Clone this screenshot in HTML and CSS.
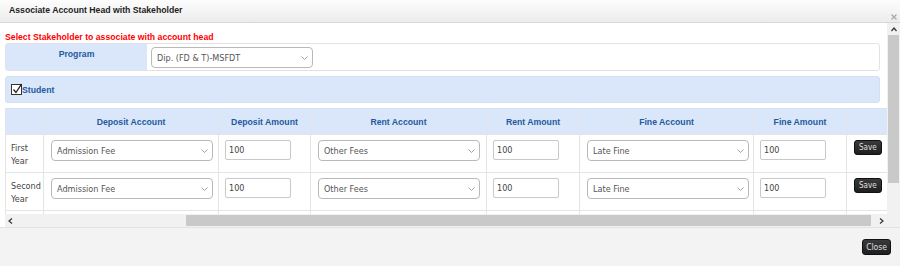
FILE: index.html
```html
<!DOCTYPE html>
<html lang="en">
<head>
    <meta charset="UTF-8">
    <meta name="viewport" content="width=device-width, initial-scale=1.0">
    <title>Associate Account Head with Stakeholder</title>
    <link rel="stylesheet" href="styles.css">
</head>
<body>
    <div class="dialog">
        <!-- Title bar -->
        <div class="dialog-head">
            <span class="dialog-title">Associate Account Head with Stakeholder</span>
            <svg class="dialog-x" width="6" height="6" viewBox="0 0 6 6"><path d="M0.5 0.5L5.5 5.5M5.5 0.5L0.5 5.5" stroke="#a8a8a8" stroke-width="1.2"/></svg>
        </div>

        <div class="dialog-body">
            <div class="content">
                <p class="hint">Select Stakeholder to associate with account head</p>

                <!-- Program -->
                <div class="program-row">
                    <div class="program-label">Program</div>
                    <div class="program-field">
                        <div class="select">
                            <span>Dip. (FD &amp; T)-MSFDT</span>
                            <svg width="7" height="4" viewBox="0 0 7 4"><path d="M0.5 0.5L3.5 3.5L6.5 0.5" fill="none" stroke="#999" stroke-width="0.9"/></svg>
                        </div>
                    </div>
                </div>

                <!-- Stakeholder -->
                <div class="student-row">
                    <svg class="check" width="11" height="12" viewBox="0 0 11 12">
                        <rect x="0.5" y="1.5" width="10" height="10" fill="#fff" stroke="#333"/>
                        <path d="M2.5 6.5L5 9.5L10.5 1" fill="none" stroke="#222" stroke-width="1.3"/>
                    </svg>
                    <span>Student</span>
                </div>

                <!-- Account grid -->
                <div class="grid-wrap">
                    <div class="grid-clip">
                        <table class="grid">
                            <colgroup>
                                <col style="width:38px">
                                <col style="width:175px">
                                <col style="width:92px">
                                <col style="width:176px">
                                <col style="width:93px">
                                <col style="width:174px">
                                <col style="width:93px">
                                <col style="width:41px">
                            </colgroup>
                            <thead>
                                <tr>
                                    <th></th>
                                    <th>Deposit Account</th>
                                    <th>Deposit Amount</th>
                                    <th>Rent Account</th>
                                    <th>Rent Amount</th>
                                    <th>Fine Account</th>
                                    <th>Fine Amount</th>
                                    <th></th>
                                </tr>
                            </thead>
                            <tbody>
                                <tr>
                                    <td class="year">First Year</td>
                                    <td><div class="select"><span>Admission Fee</span><svg width="7" height="4" viewBox="0 0 7 4"><path d="M0.5 0.5L3.5 3.5L6.5 0.5" fill="none" stroke="#999" stroke-width="0.9"/></svg></div></td>
                                    <td><div class="amount">100</div></td>
                                    <td><div class="select"><span>Other Fees</span><svg width="7" height="4" viewBox="0 0 7 4"><path d="M0.5 0.5L3.5 3.5L6.5 0.5" fill="none" stroke="#999" stroke-width="0.9"/></svg></div></td>
                                    <td><div class="amount">100</div></td>
                                    <td><div class="select"><span>Late Fine</span><svg width="7" height="4" viewBox="0 0 7 4"><path d="M0.5 0.5L3.5 3.5L6.5 0.5" fill="none" stroke="#999" stroke-width="0.9"/></svg></div></td>
                                    <td><div class="amount">100</div></td>
                                    <td><button class="btn">Save</button></td>
                                </tr>
                                <tr>
                                    <td class="year">Second Year</td>
                                    <td><div class="select"><span>Admission Fee</span><svg width="7" height="4" viewBox="0 0 7 4"><path d="M0.5 0.5L3.5 3.5L6.5 0.5" fill="none" stroke="#999" stroke-width="0.9"/></svg></div></td>
                                    <td><div class="amount">100</div></td>
                                    <td><div class="select"><span>Other Fees</span><svg width="7" height="4" viewBox="0 0 7 4"><path d="M0.5 0.5L3.5 3.5L6.5 0.5" fill="none" stroke="#999" stroke-width="0.9"/></svg></div></td>
                                    <td><div class="amount">100</div></td>
                                    <td><div class="select"><span>Late Fine</span><svg width="7" height="4" viewBox="0 0 7 4"><path d="M0.5 0.5L3.5 3.5L6.5 0.5" fill="none" stroke="#999" stroke-width="0.9"/></svg></div></td>
                                    <td><div class="amount">100</div></td>
                                    <td><button class="btn">Save</button></td>
                                </tr>
                                <tr>
                                    <td></td><td></td><td></td><td></td><td></td><td></td><td></td><td></td>
                                </tr>
                            </tbody>
                        </table>
                    </div>
                    <!-- horizontal scrollbar -->
                    <div class="hscroll">
                        <svg width="5" height="6" viewBox="0 0 5 6"><path d="M4 0.5L1 3L4 5.5" fill="none" stroke="#333" stroke-width="1.2"/></svg>
                        <div class="hscroll-track"><div class="hscroll-thumb"></div></div>
                        <svg width="5" height="6" viewBox="0 0 5 6"><path d="M1 0.5L4 3L1 5.5" fill="none" stroke="#333" stroke-width="1.2"/></svg>
                    </div>
                </div>
            </div>

            <!-- vertical scrollbar -->
            <div class="vscroll">
                <svg class="vscroll-up" width="6" height="5" viewBox="0 0 6 5"><path d="M0.5 4L3 1L5.5 4" fill="none" stroke="#333" stroke-width="1.2"/></svg>
                <div class="vscroll-thumb"></div>
            </div>
        </div>

        <div class="dialog-foot">
            <button class="btn btn-close">Close</button>
        </div>
    </div>
</body>
</html>
```

FILE: styles.css
```css
body {
    margin: 0;
    font-family: "DejaVu Sans Condensed", "DejaVu Sans", sans-serif;
    font-size: 9px;
    color: #333;
    background: #fff;
}

/* bold labels use a narrower face */
.dialog-title,
.hint,
.program-label,
.student-row,
.grid th {
    font-family: "Liberation Sans", Arial, sans-serif;
    font-weight: bold;
    font-size: 8.7px;
}

.dialog {
    width: 900px;
    height: 266px;
    display: flex;
    flex-direction: column;
    overflow: hidden;
}

/* Title bar */
.dialog-head {
    height: 22px;
    border-bottom: 1px solid #d9d9d9;
    background: linear-gradient(#fdfdfd, #ececec);
    display: flex;
    justify-content: space-between;
    align-items: center;
    padding: 0 3px 0 9px;
}

.dialog-title {
    color: #222;
    margin-top: -2px;
}

.dialog-x {
    align-self: flex-end;
    margin-bottom: 2px;
}

/* Body */
.dialog-body {
    height: 204px;
    display: flex;
}

.content {
    flex: 1;
    padding-left: 5px;
    overflow: hidden;
}

.hint {
    margin: 0;
    padding-top: 9px;
    height: 11px;
    line-height: 11px;
    color: #ff0000;
}

.program-row {
    height: 26px;
    margin-right: 7px;
    border: 1px solid #e2e2e2;
    border-radius: 3px;
    display: flex;
}

.program-label {
    width: 141px;
    background: #dae7fb;
    color: #245a9c;
    text-align: center;
    padding-top: 5px;
    box-sizing: border-box;
}

.program-field {
    padding: 3px 4px;
}

.select {
    width: 162px;
    height: 21px;
    box-sizing: border-box;
    border: 1px solid #b9b9b9;
    border-radius: 4px;
    background: #fff;
    color: #555;
    display: flex;
    justify-content: space-between;
    align-items: center;
    padding: 0 4px 0 5px;
}

.student-row {
    height: 25px;
    margin: 5px 7px 0 0;
    border: 1px solid #d3e0f4;
    border-radius: 3px;
    background: #dae7fb;
    display: flex;
    align-items: center;
    padding-left: 5px;
    color: #245a9c;
}

.check {
    margin-bottom: 2px;
}

/* Grid */
.grid-wrap {
    margin-top: 5px;
}

.grid-clip {
    height: 106px;
    overflow: hidden;
}

.grid {
    width: 882px;
    table-layout: fixed;
    border-collapse: collapse;
}

.grid th {
    height: 25px;
    background: #dae7fb;
    color: #245a9c;
    border: 1px solid #e4e4e4;
    border-top-color: #d6e2f3;
    padding: 0;
}

.grid td {
    height: 38px;
    border: 1px solid #e4e4e4;
    vertical-align: top;
    padding: 5px 6px 0 6px;
    box-sizing: border-box;
}

.grid td.year {
    padding: 7px 5px 0 5px;
    line-height: 13px;
    color: #444;
}

.grid td:nth-child(2) .select,
.grid td:nth-child(4) .select,
.grid td:nth-child(6) .select {
    margin-left: 1px;
}

.amount {
    width: 66px;
    height: 20px;
    box-sizing: border-box;
    border: 1px solid #c9c9c9;
    border-radius: 2px;
    padding-left: 3px;
    line-height: 18px;
    color: #444;
}

.btn {
    font-family: inherit;
    font-size: 8px;
    color: #e0e0e0;
    background: linear-gradient(#3a3a3a, #1f1f1f);
    border: 1px solid #111;
    border-radius: 3px;
    height: 15px;
    padding: 0 4px;
    margin-left: 1px;
    cursor: pointer;
}

/* fake scrollbars */
.hscroll {
    height: 13px;
    background: #f1f1f1;
    display: flex;
    align-items: center;
    padding: 0 3px;
}

.hscroll-track {
    flex: 1;
    height: 11px;
    margin: 0 3px;
}

.hscroll-thumb {
    height: 11px;
    margin-left: 170px;
    width: 685px;
    background: #c9c9c9;
}

.vscroll {
    width: 13px;
    background: #f1f1f1;
    display: flex;
    flex-direction: column;
    align-items: center;
}

.vscroll-up {
    margin-top: 4px;
}

.vscroll-thumb {
    width: 11px;
    height: 148px;
    margin-top: 3px;
    background: #c9c9c9;
}

/* Footer */
.dialog-foot {
    flex: 1;
    border-top: 1px solid #e3e3e3;
    background: #f3f3f3;
    display: flex;
    justify-content: flex-end;
    align-items: flex-start;
    padding: 11px 9px 0 0;
}

.btn-close {
    height: 16px;
    font-size: 8.5px;
    padding: 0 3px;
}
```
